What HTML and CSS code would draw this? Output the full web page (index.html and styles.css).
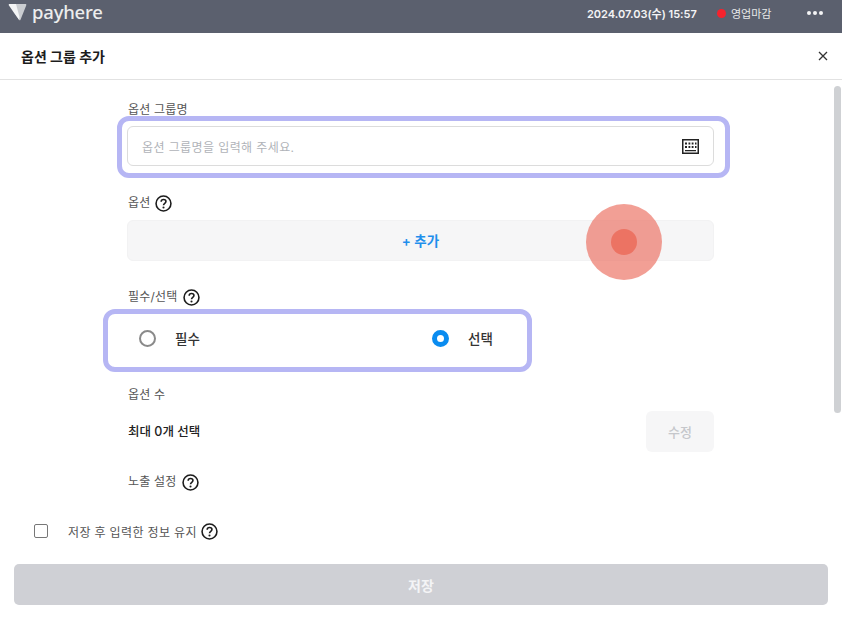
FILE: index.html
```html
<!DOCTYPE html>
<html lang="ko">

<head>
    <meta charset="UTF-8">
    <meta name="viewport" content="width=device-width, initial-scale=1.0">
    <title>옵션 그룹 추가</title>
    <link rel="stylesheet" href="styles.css">
</head>

<body>
    <header class="topbar">
        <div class="topbar__logo">
            <svg width="19" height="18" viewBox="0 0 19 18">
                <path d="M1 1 L18 1 Q18.600 1.500 18.200 2.500 L12.500 16.800 Q11.800 17.800 11 16.800 Z" fill="#c9ccd0" />
                <path d="M1 1 L8 1 L11.500 14 L11 16.800 Q6 10 .6 2 Z" fill="#f3f4f5" />
            </svg>
            <span class="topbar__name">payhere</span>
        </div>
        <div class="topbar__right">
            <span class="topbar__date">2024.07.03(수) 15:57</span>
            <span class="topbar__status"><i class="topbar__dot"></i>영업마감</span>
            <span class="topbar__more"><i></i><i></i><i></i></span>
        </div>
    </header>

    <div class="title-row">
        <h1 class="title-row__text">옵션 그룹 추가</h1>
        <svg class="title-row__close" width="10" height="10" viewBox="0 0 10 10">
            <path d="M1 1 L9 9 M9 1 L1 9" stroke="#333" stroke-width="1.300" fill="none" />
        </svg>
    </div>

    <main class="form">
        <section class="field field--name">
            <div class="field__label">옵션 그룹명</div>
            <div class="input">
                <span class="input__placeholder">옵션 그룹명을 입력해 주세요.</span>
                <svg width="17" height="15" viewBox="0 0 17 15">
                    <rect x="0.750" y="0.750" width="15.500" height="13.500" fill="none" stroke="#222" stroke-width="1.500" />
                    <path d="M3 3.500h2v2h-2zM6.500 3.500h1.800v2h-1.800zM9.700 3.500h1.800v2h-1.800zM13 3.500h1.500v2h-1.500zM3 7h2v2h-2zM6.500 7h1.800v2h-1.800zM9.700 7h1.800v2h-1.800zM13 7h1.500v2h-1.500zM3 11h11v1.300h-11z" fill="#222" />
                </svg>
            </div>
        </section>

        <section class="field field--options">
            <div class="field__label">옵션
                <svg class="help" viewBox="0 0 16 16"><use href="#help-icon" /></svg>
            </div>
            <div class="add-btn">+ 추가</div>
        </section>

        <section class="field field--required">
            <div class="field__label">필수/선택
                <svg class="help" viewBox="0 0 16 16"><use href="#help-icon" /></svg>
            </div>
            <div class="radio-group">
                <label class="radio"><i class="radio__mark"></i>필수</label>
                <label class="radio"><i class="radio__mark radio__mark--on"></i>선택</label>
            </div>
        </section>

        <section class="field field--count">
            <div class="field__label">옵션 수</div>
            <div class="count-row">
                <span class="count-row__text">최대 0개 선택</span>
                <span class="count-row__btn">수정</span>
            </div>
        </section>

        <section class="field field--expose">
            <div class="field__label">노출 설정
                <svg class="help" viewBox="0 0 16 16"><use href="#help-icon" /></svg>
            </div>
        </section>
    </main>

    <footer class="footer">
        <label class="keep">
            <i class="keep__box"></i>
            저장 후 입력한 정보 유지
            <svg class="help" viewBox="0 0 16 16"><use href="#help-icon" /></svg>
        </label>
        <div class="save-btn">저장</div>
    </footer>

    <div class="scroll-thumb"></div>
    <div class="touch"><div class="touch__core"></div></div>

    <svg width="0" height="0" class="sprites">
        <symbol id="help-icon" viewBox="0 0 16 16">
            <circle cx="8" cy="8" r="7" fill="none" stroke="#1c1c1c" stroke-width="1.500" />
            <path d="M5.800 6.300 C5.800 3.600 10.300 3.700 10.300 6.200 C10.300 7.900 8 7.800 8 9.600" fill="none" stroke="#1c1c1c" stroke-width="1.500" />
            <circle cx="8" cy="11.800" r="1" fill="#1c1c1c" />
        </symbol>
    </svg>
</body>

</html>
```

FILE: styles.css
```css
* {
    box-sizing: border-box;
}

html,
body {
    margin: 0;
    height: 620px;
    overflow: hidden;
    background: #fff;
}

body {
    position: relative;
    font-family: Inter, "Noto Sans CJK KR", sans-serif;
    color: #222;
}

.sprites {
    position: absolute;
}

/* top bar */
.topbar {
    height: 33px;
    background: #5b606e;
    color: #fff;
    display: flex;
    justify-content: space-between;
    align-items: center;
    padding: 0 19px 7px 8px;
}

.topbar__logo {
    display: flex;
    align-items: center;
    gap: 5px;
    margin-top: -2px;
}

.topbar__name {
    font-family: "Noto Sans", sans-serif;
    font-size: 18.500px;
    font-weight: 500;
    line-height: 20px;
    letter-spacing: -0.2px;
    color: #eceded;
}

.topbar__right {
    display: flex;
    align-items: center;
    font-size: 11px;
}

.topbar__date {
    font-weight: 600;
    width: 130px;
    color: #f4f4f5;
}

.topbar__status {
    display: flex;
    align-items: center;
    gap: 5px;
    width: 90px;
    color: #e8e9ea;
}

.topbar__dot {
    width: 9px;
    height: 9px;
    border-radius: 50%;
    background: #f5222d;
}

.topbar__more {
    display: flex;
    gap: 2px;
}

.topbar__more i {
    width: 4px;
    height: 4px;
    border-radius: 50%;
    background: #f4f4f5;
}

/* title */
.title-row {
    height: 47px;
    border-bottom: 1px solid #e2e2e2;
    display: flex;
    justify-content: space-between;
    align-items: center;
    padding: 0 14px 0 21px;
}

.title-row__text {
    margin: 0;
    font-size: 14px;
    font-weight: 700;
    color: #1c1c1c;
}

/* form */
.form {
    width: 587px;
    height: 442px;
    margin-left: 127px;
}

.field__label {
    display: flex;
    align-items: center;
    gap: 5px;
    padding-left: 1px;
    font-size: 12px;
    letter-spacing: 0.2px;
    line-height: 18px;
    color: #555;
}

.help {
    width: 17px;
    height: 17px;
}

.field--name {
    padding-top: 21px;
}

.input {
    position: relative;
    height: 40px;
    margin-top: 7px;
    padding: 0 14px;
    border: 1px solid #dcdcdc;
    border-radius: 6px;
    display: flex;
    align-items: center;
    justify-content: space-between;
}

/* 강조 테두리 */
.input::after {
    content: "";
    position: absolute;
    top: -11px;
    left: -11px;
    right: -17px;
    bottom: -13px;
    border: 5px solid #b6b6f4;
    border-radius: 12px;
}

.input__placeholder {
    font-size: 12px;
    letter-spacing: 0.4px;
    color: #b0b3b8;
}

.field--options {
    padding-top: 28px;
}

.add-btn {
    height: 41px;
    margin-top: 8px;
    border-radius: 6px;
    background: #f6f6f7;
    border: 1px solid #f2f2f3;
    display: flex;
    align-items: center;
    justify-content: center;
    font-size: 13.500px;
    font-weight: 600;
    color: #1f8fec;
    padding-bottom: 2px;
}

.field--required {
    padding-top: 27px;
}

.radio-group {
    width: 429px;
    height: 63px;
    margin: 3px 0 0 -24px;
    padding: 0 33px 5px 31px;
    border: 5px solid #b6b6f4;
    border-radius: 12px;
    display: flex;
    align-items: center;
    justify-content: space-between;
}

.radio {
    display: flex;
    align-items: center;
    gap: 19px;
    width: 62px;
    font-size: 13.500px;
    font-weight: 500;
    white-space: nowrap;
    color: #333;
}

.radio__mark {
    flex: none;
    width: 17px;
    height: 17px;
    border: 2px solid #8a8a8a;
    border-radius: 50%;
}

.radio__mark--on {
    border: 5px solid #0a8cf0;
}

.field--count {
    padding-top: 14px;
}

.count-row {
    height: 41px;
    margin-top: 7px;
    display: flex;
    align-items: center;
    justify-content: space-between;
    padding-left: 1px;
}

.count-row__text {
    font-size: 12.500px;
    font-weight: 500;
    color: #222;
    margin-top: -2px;
}

.count-row__btn {
    width: 68px;
    height: 41px;
    border-radius: 6px;
    background: #f6f6f7;
    display: flex;
    align-items: center;
    justify-content: center;
    font-size: 13px;
    font-weight: 500;
    color: #c5c7cb;
}

.field--expose {
    padding-top: 21px;
}

/* footer */
.footer {
    padding: 0 14px;
}

.keep {
    display: flex;
    align-items: center;
    gap: 4px;
    height: 20px;
    padding-left: 20px;
    font-size: 12px;
    letter-spacing: 0.35px;
    color: #555;
    margin-top: -1px;
}

.keep__box {
    width: 14px;
    height: 14px;
    margin-right: 16px;
    border: 1.500px solid #777;
    border-radius: 2px;
}

.save-btn {
    height: 41px;
    margin-top: 23px;
    border-radius: 5px;
    background: #cfd0d5;
    display: flex;
    align-items: center;
    justify-content: center;
    font-size: 14px;
    font-weight: 600;
    color: #f4f4f6;
}

/* overlays */
.scroll-thumb {
    position: absolute;
    left: 834px;
    top: 86px;
    width: 7px;
    height: 327px;
    border-radius: 4px;
    background: #cfd1d4;
}

.touch {
    position: absolute;
    left: 586px;
    top: 204px;
    width: 76px;
    height: 76px;
    border-radius: 50%;
    background: rgba(236, 118, 104, 0.7);
    display: flex;
    align-items: center;
    justify-content: center;
}

.touch__core {
    width: 26px;
    height: 26px;
    border-radius: 50%;
    background: #ec7363;
}
```
